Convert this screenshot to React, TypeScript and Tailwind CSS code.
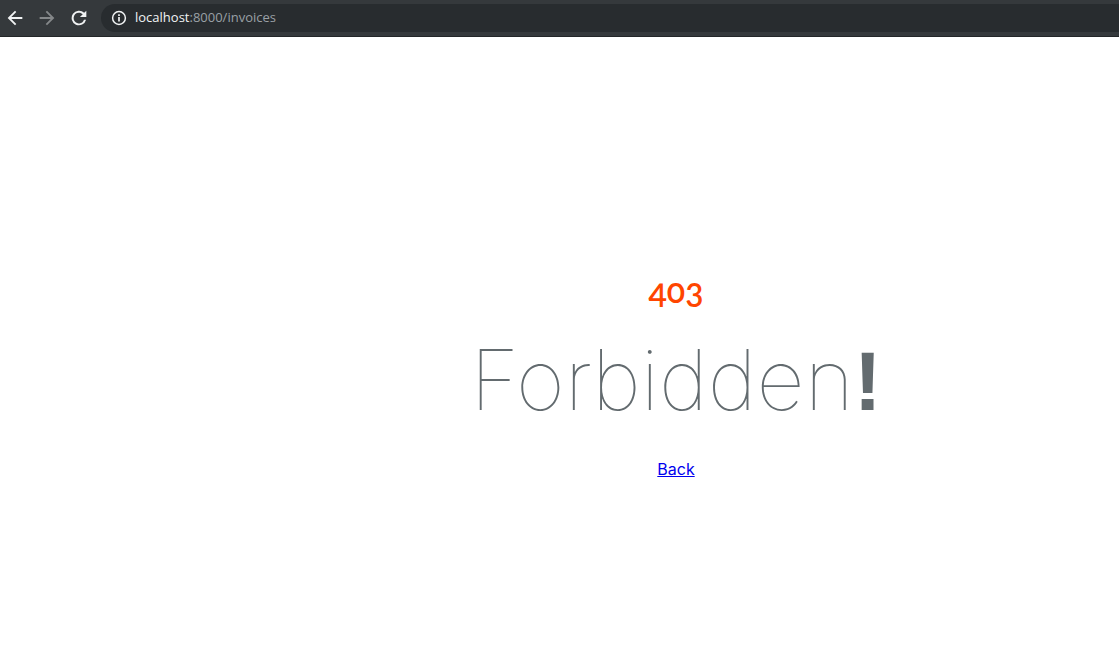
function BrowserBar() {
  return (
    <header className="flex h-[37px] items-center border-b border-[#232628] bg-[#35393c] text-[#f1f3f4]">
      <nav className="flex items-center gap-2 pl-[3px]">
        <button type="button" aria-label="Back" className="flex w-6 justify-center">
          <svg viewBox="0 0 24 24" className="h-[22px] w-[22px] shrink-0" fill="currentColor">
            <path d="M20 10.8H8l5.4-5.4L12 4l-8 8 8 8 1.4-1.4L8 13.2h12z" />
          </svg>
        </button>
        <button type="button" aria-label="Forward" className="flex w-6 justify-center text-[#85888a]">
          <svg viewBox="0 0 24 24" className="h-[22px] w-[22px] shrink-0" fill="currentColor">
            <path d="m12 4-1.4 1.4 5.4 5.4H4v2.4h12l-5.4 5.4L12 20l8-8z" />
          </svg>
        </button>
        <button type="button" aria-label="Reload" className="flex w-6 justify-center">
          <svg viewBox="0 0 24 24" className="h-[22px] w-[22px] shrink-0" fill="currentColor">
            <path d="M17.65 6.35A8 8 0 1 0 19.73 14h-2.3A5.8 5.8 0 1 1 12 6.2c1.6 0 3 .6 4.1 1.7L13 11h7V4z" />
          </svg>
        </button>
      </nav>
      <div className="ml-[10px] flex h-7 flex-1 items-center gap-2 rounded-l-full bg-[#282c2f] pl-[10px]">
        <svg viewBox="0 0 16 16" className="h-4 w-4" fill="none" stroke="currentColor">
          <circle cx="8" cy="8" r="6.4" strokeWidth="1.5" />
          <path d="M8 7v4.5M8 4.3V6" strokeWidth="1.7" />
        </svg>
        <p className="font-['Open_Sans',sans-serif] text-[13px] text-[#9aa0a6]">
          <span className="text-[#f1f3f4]">localhost</span>:8000/invoices
        </p>
      </div>
    </header>
  );
}

export default function App() {
  return (
    <div className="min-h-screen bg-white">
      <BrowserBar />
      <main className="flex flex-col items-center pt-[229px] pl-[233px] font-['Lato',sans-serif]">
        <h1 className="text-[34px] leading-12 font-semibold text-[#ff4500] oldstyle-nums">403</h1>
        <p className="mt-[10px] font-['Inter',sans-serif] text-[84px] leading-[112px] font-thin text-[#636b6f]">
          Forbidden<b className="font-['Liberation_Sans',sans-serif] font-bold">!</b>
        </p>
        <a href="#" className="mt-5 font-['Inter',sans-serif] text-base leading-6 text-[#0000ee] underline">
          Back
        </a>
      </main>
    </div>
  );
}
